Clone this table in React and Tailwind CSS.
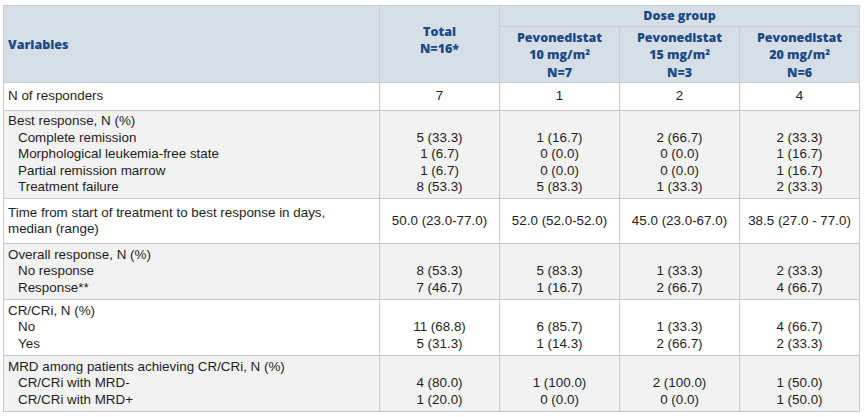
import React from "react";

const rows = [
  { bg: "bg-white", h: "h-[28px]", left: [["N of responders", 0]], vals: [["7"], ["1"], ["2"], ["4"]] },
  {
    bg: "bg-[#f2f2f2]", h: "h-[88px]",
    left: [["Best response, N (%)", 0], ["Complete remission", 1], ["Morphological leukemia-free state", 1], ["Partial remission marrow", 1], ["Treatment failure", 1]],
    vals: [
      ["", "5 (33.3)", "1 (6.7)", "1 (6.7)", "8 (53.3)"],
      ["", "1 (16.7)", "0 (0.0)", "0 (0.0)", "5 (83.3)"],
      ["", "2 (66.7)", "0 (0.0)", "0 (0.0)", "1 (33.3)"],
      ["", "2 (33.3)", "1 (16.7)", "1 (16.7)", "2 (33.3)"],
    ],
  },
  {
    bg: "bg-white", h: "h-[45px]",
    left: [["Time from start of treatment to best response in days,", 0], ["median (range)", 0]],
    vals: [["50.0 (23.0-77.0)"], ["52.0 (52.0-52.0)"], ["45.0 (23.0-67.0)"], ["38.5 (27.0 - 77.0)"]],
  },
  {
    bg: "bg-[#f2f2f2]", h: "h-[56px]",
    left: [["Overall response, N (%)", 0], ["No response", 1], ["Response**", 1]],
    vals: [["", "8 (53.3)", "7 (46.7)"], ["", "5 (83.3)", "1 (16.7)"], ["", "1 (33.3)", "2 (66.7)"], ["", "2 (33.3)", "4 (66.7)"]],
  },
  {
    bg: "bg-white", h: "h-[56px]",
    left: [["CR/CRi, N (%)", 0], ["No", 1], ["Yes", 1]],
    vals: [["", "11 (68.8)", "5 (31.3)"], ["", "6 (85.7)", "1 (14.3)"], ["", "1 (33.3)", "2 (66.7)"], ["", "4 (66.7)", "2 (33.3)"]],
  },
  {
    bg: "bg-[#f2f2f2]", h: "h-[56px]",
    left: [["MRD among patients achieving CR/CRi, N (%)", 0], ["CR/CRi with MRD-", 1], ["CR/CRi with MRD+", 1]],
    vals: [["", "4 (80.0)", "1 (20.0)"], ["", "1 (100.0)", "0 (0.0)"], ["", "2 (100.0)", "0 (0.0)"], ["", "1 (50.0)", "1 (50.0)"]],
  },
];

const hd = "border border-[#c8cdd2] bg-[#d6dfe8] text-[#1b4a86] font-extrabold text-center align-middle";

function Dose({ mg, n }) {
  return (
    <th className={hd + " leading-[17.5px] pt-[1px]"}>
      <div>Pevonedistat</div>
      <div>
        {mg} mg/m<sup className="text-[8px]">2</sup>
      </div>
      <div>N={n}</div>
    </th>
  );
}

export default function App() {
  return (
    <div className="bg-white w-[865px] h-[417px] pl-[3px] pt-[5px]" style={{ fontFamily: '"Liberation Sans", Arial, sans-serif' }}>
      <table className="table-fixed border-collapse w-[856px] text-[13.4px] text-[#1e1e1e]">
        <colgroup>
          <col className="w-[376px]" />
          <col className="w-[120px]" />
          <col className="w-[120px]" />
          <col className="w-[120px]" />
          <col className="w-[120px]" />
        </colgroup>
        <thead style={{ fontFamily: '"Open Sans", "Liberation Sans", sans-serif' }} className="text-[12.5px]">
          <tr className="h-[21px]">
            <th rowSpan={2} className={hd + " text-left pl-[4px] pt-[3px]"}>Variables</th>
            <th rowSpan={2} className={hd + " leading-[17.5px] pb-[8px]"}>
              <div>Total</div>
              <div>N=16*</div>
            </th>
            <th colSpan={3} className={hd}>Dose group</th>
          </tr>
          <tr className="h-[56px]">
            <Dose mg="10" n="7" />
            <Dose mg="15" n="3" />
            <Dose mg="20" n="6" />
          </tr>
        </thead>
        <tbody>
          {rows.map((r, i) => (
            <tr key={i} className={r.bg + " " + r.h}>
              <td className="border border-[#c8c8c8] align-middle pl-[4px] leading-[16.5px]">
                {r.left.map(([t, ind], j) => (
                  <div key={j} className={ind ? "pl-[10px]" : ""}>{t}</div>
                ))}
              </td>
              {r.vals.map((v, k) => (
                <td key={k} className="border border-[#c8c8c8] align-middle text-center leading-[16.5px]">
                  {v.map((t, j) => (
                    <div key={j} className="h-[16.5px]">{t}</div>
                  ))}
                </td>
              ))}
            </tr>
          ))}
        </tbody>
      </table>
    </div>
  );
}
